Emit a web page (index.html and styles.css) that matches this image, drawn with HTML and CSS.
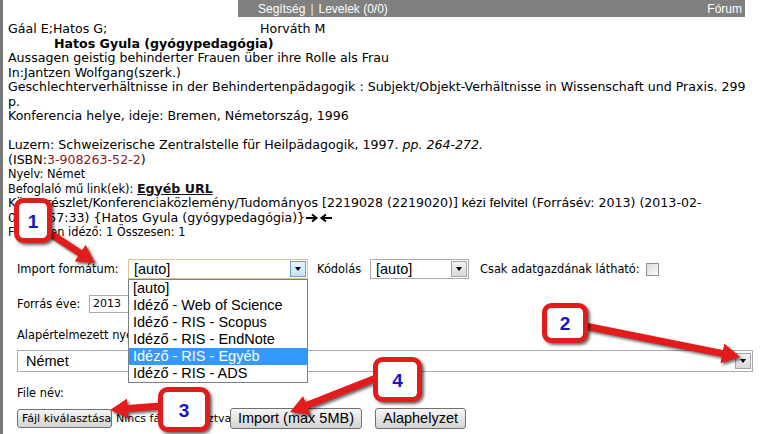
FILE: index.html
```html
<!DOCTYPE html>
<html lang="hu">
<head>
<meta charset="utf-8">
<title>Import</title>
<link rel="stylesheet" href="styles.css">
</head>
<body>
<div class="page">
  <div class="topbar">
    <div class="spacer"></div>
    <div class="nav">
      <span><a>Segítség</a><span class="sep">|</span><a>Levelek (0/0)</a></span>
      <a>Fórum</a>
    </div>
  </div>

  <div class="record">
    <div class="authors"><span class="a1">Gáal E;Hatos G;</span><span>Horváth M</span></div>
    <div class="owner">Hatos Gyula (gyógypedagógia)</div>
    <div>Aussagen geistig behinderter Frauen über ihre Rolle als Frau</div>
    <div>In:Jantzen Wolfgang(szerk.)</div>
    <div>Geschlechterverhältnisse in der Behindertenpädagogik : Subjekt/Objekt-Verhältnisse in Wissenschaft und Praxis. 299</div>
    <div>p.</div>
    <div>Konferencia helye, ideje: Bremen, Németország, 1996</div>
    <div class="blank"></div>
    <div>Luzern: Schweizerische Zentralstelle für Heilpädagogik, 1997. <i>pp. 264-272.</i></div>
    <div>(ISBN:<span class="isbn">3-908263-52-2</span>)</div>
    <div class="small">Nyelv: Német</div>
    <div class="small">Befoglaló mű link(ek): <a class="url">Egyéb URL</a></div>
    <div>Könyvrészlet/Konferenciaközlemény/Tudományos [2219028 (2219020)] <span class="arial">kézi felvitel</span> (Forrásév: 2013) (2013-02-</div>
    <div>07 22:57:33) {Hatos Gyula (gyógypedagógia)}<svg class="arrows" width="26" height="10" viewBox="0 0 26 10" aria-hidden="true"><path d="M0 5H10M6 1.5L10.5 5L6 8.5" fill="none" stroke="#000" stroke-width="2"/><path d="M26 5H16M20 1.5L15.5 5L20 8.5" fill="none" stroke="#000" stroke-width="2"/></svg></div>
    <div class="small">Független idéző: 1 Összesen: 1</div>
  </div>

  <div class="import">
    <div class="row r1">
      <span class="lbl w-import">Import formátum:</span>
      <div class="sel sel-format">
        <span class="val">[auto]</span><span class="btn hot"></span>
        <ul class="list">
          <li>[auto]</li>
          <li>Idéző - Web of Science</li>
          <li>Idéző - RIS - Scopus</li>
          <li>Idéző - RIS - EndNote</li>
          <li class="selected">Idéző - RIS - Egyéb</li>
          <li>Idéző - RIS - ADS</li>
        </ul>
      </div>
      <span class="lbl kod">Kódolás</span>
      <div class="sel sel-kod"><span class="val">[auto]</span><span class="btn"></span></div>
      <span class="lbl csak">Csak adatgazdának látható:</span>
      <span class="check"></span>
    </div>
    <div class="row r2">
      <span class="lbl w-forras">Forrás éve:</span>
      <span class="input">2013</span>
    </div>
    <div class="lbl r3">Alapértelmezett nyelv:</div>
    <div class="sel sel-lang"><span class="val">Német</span><span class="btn"></span></div>
    <div class="lbl r5">File név:</div>
    <div class="row r6">
      <span class="button small-btn">Fájl kiválasztása</span>
      <span class="nofile">Nincs fájl kiválasztva</span>
      <span class="button big-btn">Import (max 5MB)</span>
      <span class="button big-btn alap">Alaphelyzet</span>
    </div>
  </div>

  <svg class="callouts" width="760" height="434" viewBox="0 0 760 434" xmlns="http://www.w3.org/2000/svg">
    <defs>
      <marker id="ah" markerWidth="20" markerHeight="20" refX="6" refY="10" orient="auto" markerUnits="userSpaceOnUse">
        <path d="M0,0 L18,10 L0,20 z" fill="#e31b1b"/>
      </marker>
    </defs>
    <g class="shadow">
      <line x1="48" y1="232" x2="85" y2="256.4" stroke="#e31b1b" stroke-width="7" marker-end="url(#ah)"/>
      <line x1="585" y1="326" x2="728.2" y2="354.6" stroke="#e31b1b" stroke-width="7" marker-end="url(#ah)"/>
      <line x1="160" y1="406" x2="122" y2="409" stroke="#e31b1b" stroke-width="7" marker-end="url(#ah)"/>
      <line x1="376" y1="378" x2="301.2" y2="407.6" stroke="#e31b1b" stroke-width="7" marker-end="url(#ah)"/>
    </g>
    <g class="shadow">
      <rect x="16.5" y="200.5" width="33" height="40" rx="7" fill="#fff" stroke="#e31b1b" stroke-width="5"/>
      <rect x="544.5" y="305.5" width="41" height="35" rx="7" fill="#fff" stroke="#e31b1b" stroke-width="5"/>
      <rect x="160.5" y="389.5" width="47" height="40" rx="7" fill="#fff" stroke="#e31b1b" stroke-width="5"/>
      <rect x="375.5" y="359.5" width="44" height="40" rx="7" fill="#fff" stroke="#e31b1b" stroke-width="5"/>
    </g>
    <g class="nums">
      <text x="33" y="228">1</text>
      <text x="565" y="330">2</text>
      <text x="184" y="417">3</text>
      <text x="397.5" y="387">4</text>
    </g>
  </svg>
</div>
</body>
</html>
```

FILE: styles.css
```css
* { box-sizing: border-box; }
html, body { margin: 0; padding: 0; background: #fff; }
body {
  font-family: "DejaVu Sans", Verdana, sans-serif;
  font-size: 12.6px;
  color: #000;
}
.page {
  position: relative;
  width: 760px;
  height: 434px;
  overflow: hidden;
  padding-left: 3px;
  box-shadow: inset 3px 0 0 #767676;
}

/* top navigation */
.topbar { display: flex; height: 17px; }
.topbar .spacer { width: 235px; }
.nav {
  flex: 1;
  margin-right: 15px;
  background: #808080;
  color: #fff;
  font: 12px/13px "Liberation Sans", Arial, sans-serif;
  display: flex;
  justify-content: space-between;
  padding: 3px 3px 0 20px;
}
.nav .sep { margin: 0 5px; color: #e6e6e6; }

/* record text */
.record {
  padding: 5px 0 0 5px;
  line-height: 14.5px;
  white-space: nowrap;
}
.authors .a1 { display: inline-block; width: 252px; }
.owner { font-weight: bold; margin-left: 46px; }
.blank { height: 14.5px; }
.isbn { color: #8b1c1c; }
.small { font-size: 11.4px; }
.url { font-weight: bold; font-size: 12.6px; text-decoration: underline; color: #111; }
.arial { font-family: "Liberation Sans", Arial, sans-serif; font-size: 13.5px; }
.arrows { vertical-align: -1px; margin-left: 1px; }

/* import form */
.import { padding-left: 14px; }
.row { display: flex; align-items: center; }
.lbl { font-size: 11.4px; }
.r1 { height: 20px; margin-top: 19.5px; }
.w-import { width: 111px; }
.sel {
  position: relative;
  height: 20px;
  border: 1px solid #a5acb5;
  background: #fff;
  display: flex;
  align-items: center;
}
.sel .val {
  flex: 1;
  padding-left: 5px;
  font: 14.5px/17px "Liberation Sans", Arial, sans-serif;
}
.sel .btn {
  position: relative;
  width: 16px;
  height: 16px;
  margin-right: 1px;
  border: 1px solid #a4a4a4;
  background: linear-gradient(#f3f3f3, #d9d9d9);
}
.sel .btn::after {
  content: "";
  position: absolute;
  left: 4px;
  top: 5px;
  border-left: 3.5px solid transparent;
  border-right: 3.5px solid transparent;
  border-top: 4px solid #000;
}
.sel .btn.hot {
  border-color: #6f9fc8;
  background: linear-gradient(#e8f4fc, #c2e2f6);
}
.sel-format { width: 180px; border-color: #d9c48c; }
.kod { margin-left: 9px; width: 53px; }
.sel-kod { width: 99px; }
.csak { margin-left: 11px; }
.check {
  width: 13px;
  height: 13px;
  margin-left: 6px;
  border: 1px solid #8f8f8f;
  background: linear-gradient(135deg, #dcdcdc, #fbfbfb);
}

.list {
  position: absolute;
  top: 19px;
  left: -1px;
  width: 180px;
  margin: 0;
  padding: 0;
  list-style: none;
  background: #fff;
  border: 1px solid #7a7f87;
  z-index: 5;
}
.list li {
  height: 17px;
  padding-left: 4px;
  font: 14.5px/17px "Liberation Sans", Arial, sans-serif;
  white-space: nowrap;
}
.list li.selected { background: #3399ff; color: #fff; }

.r2 { margin-top: 16px; height: 18px; }
.w-forras { width: 72px; }
.input {
  width: 60px;
  height: 18px;
  border: 1px solid #a5acb5;
  font-size: 11px;
  line-height: 16px;
  padding-left: 3px;
}
.r3 { margin-top: 15px; line-height: 14px; }
.sel-lang { width: 736px; height: 22px; margin-top: 8px; }
.sel-lang .val { padding-left: 8px; }
.r5 { margin-top: 14px; line-height: 14px; }
.r6 { margin-top: 8px; height: 21px; }

.button {
  display: inline-flex;
  align-items: center;
  border: 1px solid #707070;
  border-radius: 3px;
  background: linear-gradient(#f6f6f6, #e4e4e4 50%, #d4d4d4);
  white-space: nowrap;
}
.small-btn { font-size: 11px; height: 19px; padding: 0 4px; width: 95px; }
.nofile { font-size: 11px; margin-left: 4px; width: 110px; white-space: nowrap; }
.big-btn {
  font: 14.5px/17px "Liberation Sans", Arial, sans-serif;
  height: 21px;
  padding: 0 7px;
  margin-left: 4px;
}
.alap { margin-left: 13px; }

/* annotation overlay */
.callouts { position: absolute; left: 0; top: 0; z-index: 10; pointer-events: none; }
.shadow { filter: drop-shadow(2px 2px 1.5px rgba(0, 0, 0, 0.6)); }
.nums text {
  font: bold 19px "Liberation Sans", Arial, sans-serif;
  fill: #1616c8;
  text-anchor: middle;
}
```
